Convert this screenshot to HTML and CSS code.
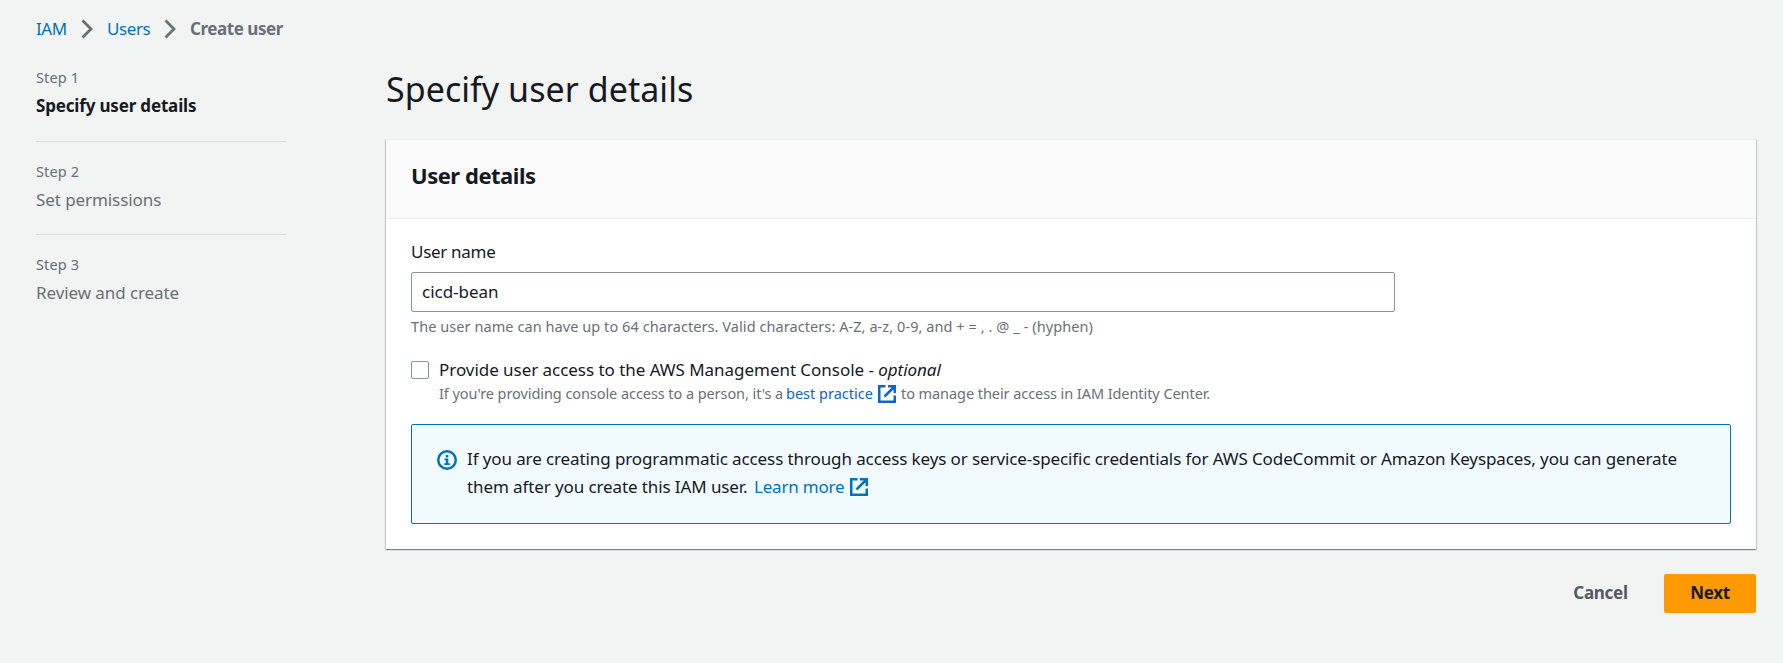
FILE: index.html
```html
<!DOCTYPE html>
<html lang="en">
<head>
<meta charset="utf-8">
<title>Create user | IAM</title>
<link rel="stylesheet" href="styles.css">
</head>
<body>
<svg width="0" height="0" class="sprite" aria-hidden="true">
  <symbol id="chevron" viewBox="0 0 12 20"><path d="M1.500 1.500 10 10l-8.500 8.500" fill="none" stroke="currentColor" stroke-width="2.800"/></symbol>
  <symbol id="external" viewBox="0 0 18 18"><path d="M7.500 1.250H1.250v15.500h15.500V10.500M10 1.250h6.750V8M16.500 1.500 6.500 11.500" fill="none" stroke="currentColor" stroke-width="2.500"/></symbol>
  <symbol id="info" viewBox="0 0 20 20"><circle cx="10" cy="10" r="8.750" fill="none" stroke="currentColor" stroke-width="2.500"/><path d="M8.800 5h2.500v2.400H8.800zM7.500 8.500h3.800v4.700h1.500V15H7.300v-1.800h1.500v-2.900H7.500z" fill="currentColor"/></symbol>
</svg>
<nav class="breadcrumbs">
  <a class="crumb-iam" href="#">IAM</a>
  <svg class="chevron"><use href="#chevron"/></svg>
  <a class="crumb-users" href="#">Users</a>
  <svg class="chevron"><use href="#chevron"/></svg>
  <span class="crumb-current">Create user</span>
</nav>
<div class="wizard">
  <ol class="steps">
    <li class="step active"><span class="step-label">Step 1</span><span class="step-name">Specify user details</span></li>
    <li class="step"><span class="step-label">Step 2</span><span class="step-name">Set permissions</span></li>
    <li class="step"><span class="step-label">Step 3</span><span class="step-name">Review and create</span></li>
  </ol>
  <main class="content">
    <h1>Specify user details</h1>
    <section class="card">
      <header class="card-header"><h2>User details</h2></header>
      <div class="card-body">
        <label class="field-label" for="username">User name</label>
        <input class="text-input" id="username" type="text" value="cicd-bean">
        <p class="hint">The user name can have up to 64 characters. Valid characters: A-Z, a-z, 0-9, and + = , . @ _ - (hyphen)</p>
        <div class="option">
          <span class="checkbox" role="checkbox" aria-checked="false"></span>
          <div>
            <div class="option-label">Provide user access to the AWS Management Console - <em>optional</em></div>
            <div class="option-desc"><span class="desc-lead">If you're providing console access to a person, it's a</span><a href="#">best practice</a><svg class="external"><use href="#external"/></svg><span class="desc-tail">to manage their access in IAM Identity Center.</span></div>
          </div>
        </div>
        <div class="alert">
          <svg class="info"><use href="#info"/></svg>
          <div class="alert-text">
            <div class="alert-line">If you are creating programmatic access through access keys or service-specific credentials for AWS CodeCommit or Amazon Keyspaces, you can generate</div>
            <div class="alert-line second"><span>them after you create this IAM user.</span><a href="#">Learn more</a><svg class="external"><use href="#external"/></svg></div>
          </div>
        </div>
      </div>
    </section>
    <div class="actions"><button class="cancel">Cancel</button><button class="next">Next</button></div>
  </main>
</div>
</body>
</html>
```
FILE: styles.css
```css
* { box-sizing: border-box; }
body {
  margin: 0;
  height: 663px;
  overflow: hidden;
  background: #f2f3f3;
  color: #16191f;
  font: 17px/28px "Noto Sans", "Open Sans", sans-serif;
  letter-spacing: -0.4px;
  white-space: nowrap;
}
.sprite { position: absolute; }
a { color: #0073bb; text-decoration: none; }
h1, h2, p, ol { margin: 0; padding: 0; }
.breadcrumbs { display: flex; align-items: center; height: 58px; padding-left: 36px; color: #687078; }
.breadcrumbs a, .breadcrumbs span { line-height: 28px; }
.chevron { width: 12px; height: 20px; margin: 0 14px; }
.crumb-iam { width: 31px; }
.crumb-users { width: 43px; }
.crumb-current { font-weight: 700; letter-spacing: -0.45px; }
.wizard { display: flex; padding: 0 27px 0 36px; }
.steps { width: 250px; margin-right: 100px; padding-top: 7px; list-style: none; color: #687078; }
.step { display: flex; flex-direction: column; height: 93px; }
.step + .step { border-top: 1px solid #d5dbdb; padding-top: 17px; }
.step:first-child { height: 76px; }
.step-label { font-size: 14.5px; line-height: 24px; letter-spacing: 0.12px; }
.step-name { line-height: 34px; letter-spacing: -0.08px; }
.active .step-name { font-weight: 700; letter-spacing: -0.17px; color: #16191f; }
.content { flex: 1; }
h1 { height: 81px; padding-top: 7px; font-size: 34px; font-weight: 400; line-height: 48px; letter-spacing: 0.05px; }
.card {
  height: 410px;
  background: #fff;
  box-shadow: 0 1px 1px 0 rgba(0, 28, 36, .3), 1px 1px 1px 0 rgba(0, 28, 36, .15), -1px 1px 1px 0 rgba(0, 28, 36, .15);
}
.card-header { height: 80px; padding: 18px 25px; background: #fafafa; border-top: 1px solid #eaeded; border-bottom: 1px solid #eaeded; }
h2 { font-size: 22px; line-height: 34px; font-weight: 700; letter-spacing: -0.48px; }
.card-body { padding: 19px 25px 0; }
.field-label { display: block; line-height: 28px; margin-bottom: 6px; letter-spacing: -0.3px; }
.text-input { display: block; width: 984px; height: 40px; padding: 0 10px 2px; border: 1px solid #879596; border-radius: 2px; font: inherit; letter-spacing: -0.02px; color: inherit; background: #fff; }
.hint { margin-top: 3px; font-size: 14.5px; line-height: 22px; letter-spacing: 0.07px; color: #687078; }
.option { display: flex; margin-top: 19px; }
.checkbox { width: 18px; height: 18px; margin: 5px 10px 0 0; border: 1px solid #879596; border-radius: 2px; }
.option-label { line-height: 28px; letter-spacing: -0.04px; }
.option-desc { display: flex; align-items: center; height: 20px; font-size: 14.5px; line-height: 20px; letter-spacing: -0.07px; color: #687078; }
.option-desc span, .option-desc a { padding-bottom: 2px; }
.option-desc a { color: #1166bb; width: 87px; letter-spacing: 0; }
.desc-lead { width: 347px; }
.external { width: 18px; height: 18px; margin-left: 5px; color: #0073bb; }
.option-desc .external { margin-right: 5px; color: #1166bb; }
.alert { display: flex; height: 100px; margin-top: 20px; padding: 20px 25px; border: 1px solid #0073bb; border-radius: 2px; background: #f1faff; }
.info { width: 20px; height: 20px; margin: 5px 10px 0 0; color: #0073bb; }
.alert-line { display: flex; align-items: center; height: 28px; letter-spacing: -0.105px; }
.second span { width: 287px; }
.second a { width: 91px; letter-spacing: -0.2px; }
.actions { display: flex; justify-content: flex-end; padding-top: 25px; }
.actions button { height: 39px; padding: 0 0 2px; border: 0; border-radius: 2px; background: none; font: inherit; letter-spacing: -0.3px; font-weight: 700; color: #545b64; }
.cancel { width: 55px; margin-right: 36px; }
.actions .next { width: 92px; background: #ff9900; color: #16191f; }
```
